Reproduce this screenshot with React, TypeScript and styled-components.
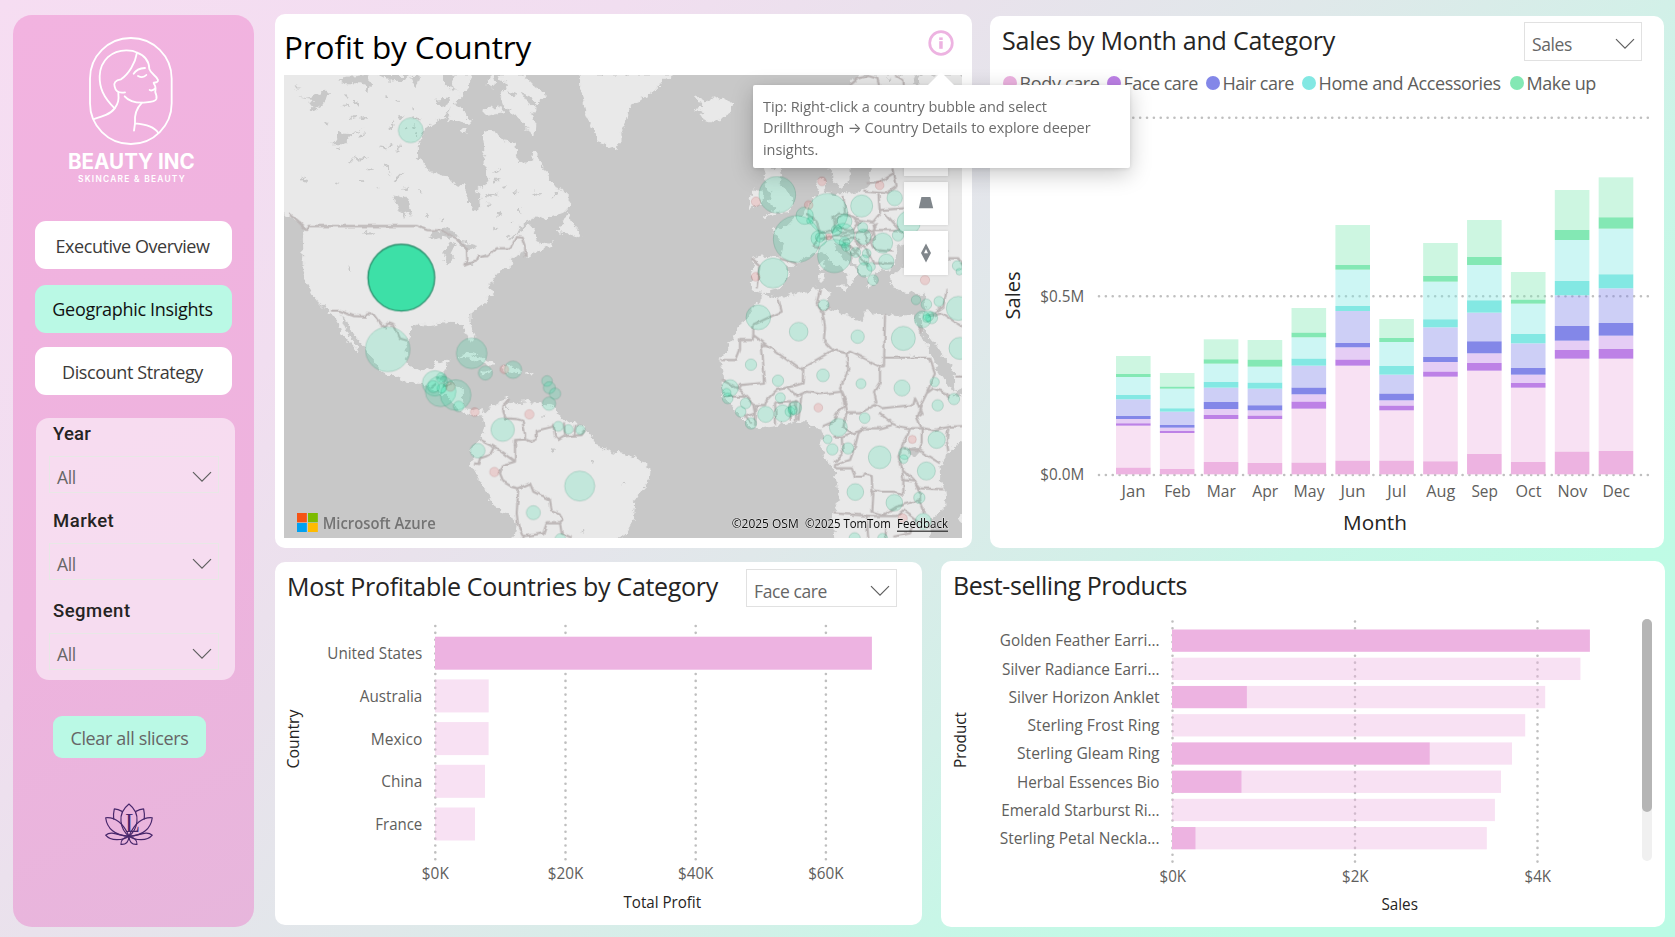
import React from "react";
import styled, { createGlobalStyle } from "styled-components";

const FONT = '"Open Sans", "Noto Sans", sans-serif';
const PINK = "#edb3e1";

const GlobalStyle = createGlobalStyle`
  *, *::before, *::after { box-sizing: border-box; }
  body { margin: 0; font-family: ${FONT}; }
  svg { display: block; }
`;

const Page = styled.div`
  width: 1675px;
  height: 937px;
  overflow: hidden;
  display: flex;
  padding: 14px 0 0 13px;
  background: linear-gradient(135deg, #f6ddf2 0%, #f1def0 24%, #e9e2ec 37%, #e0e8ea 50%, #d2f0e8 64%, #c8f6e7 71%, #bffbe5 84%, #bbfbe5 100%);
`;

/* ---------- sidebar ---------- */
const Sidebar = styled.aside`
  width: 241px;
  height: 912px;
  flex: none;
  margin-top: 0.5px;
  border-radius: 19px;
  background: linear-gradient(155deg, #f2b3e0 0%, #eeb3de 60%, #e7b6dc 100%);
`;

const LogoArea = styled.div`
  height: 206.5px;
  padding: 20.7px 0 0 53.6px;
`;

const Nav = styled.nav`
  padding-left: 22px;
`;

const NavButton = styled.div<{ $active?: boolean; $gap: number; $spacing: number }>`
  width: 197px;
  height: 48px;
  margin-bottom: ${(p) => p.$gap}px;
  padding-right: 2px;
  border-radius: 11px;
  background: ${(p) => (p.$active ? "#baf9e5" : "#fff")};
  color: ${(p) => (p.$active ? "#111" : "#3b3a39")};
  font-size: 18px;
  letter-spacing: ${(p) => p.$spacing}px;
  line-height: ${(p) => (p.$active ? 48 : 50)}px;
  text-align: center;
  white-space: nowrap;
`;

const SlicerPanel = styled.section`
  width: 199px;
  height: 262px;
  margin: 22.8px 0 0 23px;
  padding-left: 13px;
  border-radius: 13px;
  background: rgba(250, 236, 246, 0.72);
`;

const Slicer = styled.div<{ $height: number }>`
  height: ${(p) => p.$height}px;
`;

const SlicerTitle = styled.div<{ $spacing: number }>`
  padding: 5px 0 0 4px;
  height: 38px;
  font: 500 18.5px/22px Roboto, sans-serif;
  letter-spacing: ${(p) => p.$spacing}px;
  color: #252423;
`;

const SelectBox = styled.div<{ $width: number; $height: number; $line: string }>`
  width: ${(p) => p.$width}px;
  height: ${(p) => p.$height}px;
  flex: none;
  padding: 5px 6px 0 7px;
  border: 1px solid ${(p) => p.$line};
  display: flex;
  align-items: center;
  justify-content: space-between;
  font-size: 17.5px;
  letter-spacing: -0.4px;
  color: #666;
`;

const ClearButton = styled.div`
  width: 153px;
  height: 42.5px;
  margin: 36px 0 0 40px;
  border-radius: 9px;
  background: #baf9e5;
  color: #666;
  font-size: 18px;
  letter-spacing: -0.35px;
  line-height: 45px;
  text-align: center;
  white-space: nowrap;
`;

const LotusArea = styled.div`
  padding: 43.8px 0 0 91px;
`;

/* ---------- main area ---------- */
const Main = styled.main`
  width: 1390px;
  margin-left: 21px;
  flex: none;
`;

const CardRow = styled.div<{ $align: string; $gap: number; $top?: number }>`
  display: flex;
  align-items: ${(p) => p.$align};
  gap: ${(p) => p.$gap}px;
  margin-top: ${(p) => p.$top ?? 0}px;
`;

const Card = styled.section<{ $width: number; $height: number; $drop?: number }>`
  position: relative;
  width: ${(p) => p.$width}px;
  height: ${(p) => p.$height}px;
  flex: none;
  margin-top: ${(p) => p.$drop ?? 0}px;
  border-radius: 10px;
  background: #fff;
`;

const CardHead = styled.header<{ $height: number; $left: number; $right: number; $top?: number }>`
  height: ${(p) => p.$height}px;
  padding: ${(p) => p.$top ?? 0}px ${(p) => p.$right}px 0 ${(p) => p.$left}px;
  display: flex;
  align-items: flex-start;
  justify-content: space-between;
`;

const Title = styled.h2<{ $size: number; $line: number; $spacing: number; $color?: string }>`
  margin: 0;
  font-weight: 400;
  font-size: ${(p) => p.$size}px;
  line-height: ${(p) => p.$line}px;
  letter-spacing: ${(p) => p.$spacing}px;
  color: ${(p) => p.$color ?? "#252423"};
  white-space: nowrap;
`;

const InfoButton = styled.div`
  padding-top: 6.3px;
`;

const MapArea = styled.div`
  position: relative;
  width: 678px;
  height: 463px;
  margin-left: 9px;
`;

const MapControls = styled.div`
  position: absolute;
  top: 57px;
  left: 620px;
  display: flex;
  flex-direction: column;
  gap: 6px;
`;

const MapButton = styled.div`
  width: 44px;
  height: 43.5px;
  background: #fff;
  box-shadow: 0 0 3px rgba(0, 0, 0, 0.12);
  display: flex;
  align-items: center;
  justify-content: center;
`;

const Tooltip = styled.div`
  position: absolute;
  z-index: 5;
  left: 478px;
  top: 71px;
  width: 377px;
  height: 83px;
  padding: 10.6px 10px;
  border-radius: 2px;
  background: #fff;
  box-shadow: 0 6px 22px rgba(0, 0, 0, 0.22), 0 1px 4px rgba(0, 0, 0, 0.1);
  color: #6b6b6b;
  font-size: 14.5px;
  line-height: 21.5px;
  letter-spacing: -0.07px;
  white-space: nowrap;
  &::before {
    content: "";
    position: absolute;
    left: 175px;
    top: -13px;
    border: 13px solid transparent;
    border-top-width: 0;
    border-bottom-color: #fff;
  }
`;

const Arrow = styled.span`
  font-family: Inter, sans-serif;
  font-size: 14.5px;
  line-height: 1;
  letter-spacing: -0.6px;
`;

const Legend = styled.div`
  display: grid;
  grid-template-columns: 104px 99px 96px 208px auto;
  height: 27px;
  padding: 0 0 0.5px 12.5px;
  align-items: center;
`;

const LegendItem = styled.div<{ $spacing: number }>`
  display: flex;
  align-items: center;
  gap: 3px;
  font-size: 18px;
  line-height: 24px;
  letter-spacing: ${(p) => p.$spacing}px;
  color: #605e5c;
  white-space: nowrap;
`;

const Dot = styled.span<{ $color: string }>`
  width: 14px;
  height: 14px;
  border-radius: 50%;
  background: ${(p) => p.$color};
`;

const ScrollTrack = styled.div`
  position: absolute;
  top: 58px;
  right: 13px;
  width: 10.3px;
  height: 242px;
  border-radius: 6px;
  background: #f0f0f0;
`;

const ScrollThumb = styled.div`
  height: 193px;
  border-radius: 6px;
  background: #b5b5b5;
`;

/* ---------- small drawings ---------- */
const Chevron = () => (
  <svg width="20" height="12" viewBox="0 0 20 12" fill="none" stroke="#5f5f5f" strokeWidth="1.2">
    <path d="M1 1.2 L10 10.2 L19 1.2" />
  </svg>
);

const Logo = () => (
  <svg width="130" height="150" viewBox="200 105 390 450" fill="none" stroke="#fff" strokeWidth="5.5" strokeLinecap="round" strokeLinejoin="round">
    <rect x="269" y="114" width="245" height="318" rx="122" />
    <path d="M343 325C308 290 297 262 298 228C300 180 335 151 378 151C395 151 404 154 410 158C432 166 446 182 447 207C452 223 470 228 473 240C474 247 466 248 460 248C460 254 466 255 465 262C467 268 464 272 465 277C468 284 470 291 468 297C464 308 440 306 425 308C400 308 385 303 373 289" />
    <path d="M410 158C405 190 385 222 362 238C345 240 339 250 343 260C346 275 358 280 374 277" />
    <path d="M354 278C356 300 354 310 343 325C330 343 305 350 281 357" />
    <path d="M425 308C408 325 402 350 404 370L401 392M404 370C440 374 462 380 474 399" />
    <path d="M400 221C408 208 420 205 434 204M413 228Q428 236 438 225M448 270Q456 274 464 266" />
    <text x="203" y="508" textLength="380" lengthAdjust="spacingAndGlyphs" fill="#fff" stroke="none" fontFamily="Inter" fontWeight="700" fontSize="63">BEAUTY INC</text>
    <text x="233" y="546" textLength="320" fill="#fff" stroke="none" fontFamily="Inter" fontWeight="600" fontSize="25">SKINCARE &amp; BEAUTY</text>
  </svg>
);

const LotusSide = () => (
  <>
    <path d="M368 1203C357 1197 350 1195 343 1195C340 1207 340 1216 341 1226" />
    <path d="M387 1275C371 1238 345 1218 317 1221C321 1252 345 1274 387 1275Z" />
    <path d="M387 1275C362 1277 336 1256 317 1272C332 1290 368 1288 387 1275Z" />
    <path d="M387 1275C372 1278 362 1285 363 1299C378 1300 386 1290 387 1275Z" />
  </>
);

const Lotus = () => (
  <svg width="50.6" height="45.2" viewBox="312 1175 152 132" preserveAspectRatio="none" fill="none" stroke="#47276b" strokeWidth="3.6" strokeLinejoin="round">
    <path d="M387 1181C405 1195 413 1215 411 1232C409 1250 400 1265 387 1275C374 1265 365 1250 363 1232C361 1215 369 1195 387 1181Z" />
    <LotusSide />
    <g transform="translate(774 0) scale(-1 1)"><LotusSide /></g>
    <text x="376" y="1263" textLength="44" lengthAdjust="spacingAndGlyphs" fill="#47276b" stroke="none" fontFamily="Liberation Serif" fontSize="77">L</text>
  </svg>
);

const InfoIcon = () => (
  <svg width="26" height="26" viewBox="0 0 26 26" fill={PINK}>
    <circle cx="13" cy="13" r="11.3" fill="none" stroke={PINK} strokeWidth="2.7" />
    <rect x="11.2" y="7.4" width="3.5" height="2.6" />
    <rect x="11.2" y="11.2" width="3.5" height="7.6" />
  </svg>
);

/* ---------- map ---------- */
type Bubble = [number, number, number];

const westBubbles: Bubble[] = [
  [422, 391, 37], [353, 1048, 67], [605, 1060, 46], [646, 1119, 21], [729, 1109, 26], [495, 1150, 38],
  [512, 1174, 46], [557, 1185, 46], [514, 1133, 15], [515, 1165, 14], [490, 1160, 18], [566, 1219, 16], [698, 1289, 35],
  [623, 1352, 22], [929, 1458, 45], [790, 1538, 21], [831, 1143, 16], [838, 1163, 18], [855, 1181, 17],
  [837, 1211, 20], [865, 1279, 15], [895, 1288, 14], [931, 1290, 14], [871, 1617, 16],
];
const westLosses: Bubble[] = [[703, 1108, 13], [541, 1160, 14], [614, 1236, 13], [778, 1243, 14], [673, 1416, 14]];
const eastBubbles: Bubble[] = [
  [472, 584, 55], [725, 618, 33], [824, 594, 23], [866, 668, 35], [623, 640, 60], [530, 717, 70], [554, 647, 26],
  [570, 662, 10], [597, 715, 24], [600, 712, 14], [643, 768, 50], [674, 664, 22], [650, 690, 16], [670, 703, 33], [674, 727, 16],
  [678, 740, 13], [728, 682, 15], [730, 710, 23], [788, 729, 30], [834, 706, 17], [707, 757, 15], [740, 760, 13], [732, 780, 15],
  [799, 785, 23], [734, 809, 22], [753, 800, 13], [759, 840, 16], [459, 819, 45], [1012, 797, 15], [1018, 815, 10],
  [888, 900, 14], [919, 913, 16], [957, 904, 15], [1015, 925, 36], [908, 958, 25], [935, 953, 18], [920, 955, 12],
  [925, 948, 16], [611, 915, 16], [415, 952, 37], [536, 995, 28], [713, 1010, 20], [850, 1015, 36], [1020, 1045, 33],
  [393, 1094, 17], [474, 1142, 17], [609, 1126, 19], [723, 1151, 15], [846, 1164, 24], [944, 1146, 14], [1002, 1197, 17],
  [953, 1216, 17], [330, 1164, 25], [320, 1178, 13], [323, 1195, 16], [377, 1210, 16], [362, 1235, 16], [393, 1270, 17],
  [437, 1243, 24], [481, 1193, 15], [488, 1240, 25], [510, 1235, 15], [525, 1224, 20], [518, 1230, 14], [655, 1282, 27],
  [734, 1254, 16], [623, 1318, 13], [637, 1348, 17], [684, 1345, 17], [779, 1372, 34], [854, 1360, 18], [851, 1377, 13],
  [950, 1319, 26], [919, 1413, 27], [706, 1476, 25], [823, 1508, 25], [898, 1493, 17], [910, 1564, 24], [704, 1615, 17], [788, 1615, 15],
];
const eastLosses: Bubble[] = [
  [606, 544, 13], [779, 556, 13], [408, 605, 14], [566, 615, 13], [407, 830, 13], [915, 840, 14], [595, 1223, 13],
  [877, 1318, 12], [848, 1555, 14], [626, 710, 9],
];

const lakes: [number, number, number, number][] = [
  [80, 260, 18, 50], [228, 288, 12, 80], [228, 318, 24, 20], [258, 310, 18, 60], [350, 284, 12, 60], [384, 302, 10, -20],
  [432, 327, 12, 0], [172, 372, 14, 20], [252, 352, 26, -20], [285, 356, 26, 10], [276, 408, 22, -20], [204, 448, 12, 0],
  [365, 380, 30, -70], [392, 350, 18, 20], [440, 352, 26, 20], [340, 440, 20, 40], [385, 445, 24, -70], [360, 435, 14, 0],
  [270, 475, 50, -8], [242, 486, 10, 90], [304, 510, 14, -30], [350, 505, 44, 65], [385, 530, 44, -50], [279, 545, 10, 70],
  [323, 562, 14, -20], [202, 553, 18, 5], [102, 542, 28, 60], [408, 566, 18, -20], [448, 572, 16, 60], [470, 650, 16, 0],
  [516, 660, 14, 90], [680, 512, 24, -30], [680, 540, 14, 20], [700, 562, 20, -20], [665, 586, 40, -5], [738, 574, 20, 30],
  [800, 580, 30, 10], [656, 612, 12, 0], [690, 645, 20, -30], [748, 632, 22, 90], [728, 668, 12, 0], [678, 686, 12, 0],
  [860, 582, 30, -30], [296, 700, 28, -5], [234, 806, 16, 60], [408, 384, 10, 60], [436, 378, 14, -40], [438, 402, 10, 0],
  [850, 1352, 14, 10], [970, 1385, 12, 70], [1062, 1451, 16, -20], [938, 1598, 16, -40], [820, 1250, 10, 0], [714, 1222, 14, 80],
];

const landWest = `
M42 225H520L525 260L550 266L572 290L552 302L535 330L520 352L490 370L470 385L455 405L442 440L443 480L458 485L470 517L490 516L520 530L560 555L588 558V600L600 612L616 637L632 625L630 600L622 568L640 560L657 535L655 510L640 480L645 455L640 400L660 395L690 405L700 425L735 430L738 480L762 493L788 480L792 450L802 465L815 500L830 525L850 560L880 572L898 590L895 625L880 640L840 652L790 655L762 672L740 690L706 722L722 717L748 695L780 678L797 680L790 700L800 725L822 738L850 725L848 735L800 752L775 770L760 755L725 775V800L690 808L665 840L657 865L664 885L655 900L630 918L600 940V965L612 1010L605 1030L597 1015L583 985L570 965L540 964L505 968L480 974L450 970L425 985L412 1010L405 1040L408 1080L425 1105L450 1117L490 1107L497 1085L535 1080L530 1105L517 1125L505 1145L540 1150L577 1160V1200L585 1230L610 1232L635 1226L650 1245L640 1248L610 1245L585 1240L560 1222L545 1202L520 1180L490 1165L455 1150L415 1147L370 1128L335 1110L320 1095L300 1065L280 1035L250 1005L232 965L208 942L222 975L236 1003L255 1030L270 1058L242 1030L213 998L205 970L180 932L165 925L140 900L125 875L110 845L98 810L102 760L100 720L97 690L115 692L90 665L60 650L42 645Z
M545 225H600L598 260L572 290L552 262Z
M690 225L712 260L690 290L700 320L740 345L770 385L792 405L795 370L780 340L800 320L830 285L800 265L775 240L760 225Z
M650 240L670 230L677 250L662 262L650 252Z
M530 362L550 300L575 330L607 365L580 368L552 358Z M570 392L590 382L585 398Z M636 335L660 318L672 328L690 322L702 338L655 345Z
M862 698L895 636L905 668L925 690L932 712L900 702Z
M930 225L928 260L940 300L950 340L965 380L985 425L1010 432L1035 450L1050 428V400L1065 370L1075 325L1120 295L1160 265L1180 238L1215 225Z
M565 1070L600 1060L640 1075L680 1092L650 1092L610 1075Z M692 1105L725 1098L752 1112L720 1120Z M765 1118H782V1122H765Z M636 1116H658V1121H636Z
M640 1250L665 1220L690 1205L718 1197L708 1212L740 1208L780 1205L812 1215L850 1222L875 1255L900 1270L940 1275L965 1310L985 1340L1030 1358L1080 1368L1110 1380L1140 1405L1138 1440L1110 1480L1095 1490L1090 1560L1068 1600L1040 1620H735L740 1580L735 1560L700 1535L665 1505L645 1465L620 1420L605 1395V1380L615 1368L605 1350L618 1335L632 1320L640 1300L645 1275Z`;

const waterWest = `
M475 712L500 692L520 680L545 690L567 715L550 715L520 708L490 718Z M525 745L540 725L560 730L545 760V790L530 798L522 780Z
M560 722L590 725L622 735L605 750L590 755L580 740Z M585 795L625 775L605 794Z M630 768L655 762L652 770L632 774Z M370 590L385 592L398 585L412 600L425 652L412 630L402 655L385 620Z
M175 430L205 420L200 400L240 402L285 380L240 408L225 430Z M88 295L130 290L160 270L178 285L160 312L130 330L112 310L138 300Z
M200 240L220 232L290 225L300 245L295 285L280 250L230 250Z M320 225H420L400 240L360 245Z M425 225H450L435 265Z M515 225H542L548 250L530 265Z
M495 302L520 300L540 295L528 318L515 322Z M715 272L742 285L725 298Z M752 275L785 290L800 320L775 310Z M710 322L728 332L715 340Z M745 360L778 385L765 380Z`;

const bordersWest = `
M60 645L88 668L110 690L115 678H440L470 690L520 692L560 718L590 745L592 780L583 797L620 782L625 770L655 768L680 745H720L740 708L755 710L765 740L767 770
M180 932H205L250 948L285 950L288 943H310L330 970L345 982L355 970L372 976L390 1015L412 1022
M718 1197L700 1215V1235L707 1255L740 1257L757 1262L765 1300V1318L785 1325L800 1318V1292L848 1280L850 1270L855 1310L865 1320L885 1308L935 1305L945 1290
M765 1318L735 1320V1385L700 1360L672 1340L632 1320 M740 1320L733 1338 M882 1270L885 1305 M918 1275L912 1305
M672 1340L660 1365L630 1375L625 1392L612 1390 M735 1385L700 1395L690 1420L700 1445L725 1460L745 1465L780 1450L790 1475L840 1500L845 1530L872 1540L880 1560L870 1570L830 1570L820 1600L790 1605L760 1608L745 1580L740 1540L745 1465
M870 1570L875 1600L905 1613 M760 1608V1620 M500 1135L520 1130L525 1160L545 1150 M480 1165L500 1150`;

const landEast = `
M225 292L250 306L275 300L312 290L338 315L330 340L280 368L250 358L240 346L256 340L224 330L250 322Z
M690 245L720 228L760 225H1034V775L985 775L984 742L960 700L930 712L880 715L850 730L830 740L820 780L830 800L800 810L770 815L756 830L770 855L750 860L735 830L715 800L690 760L665 735L640 722L645 745L670 780L720 820L702 830L690 852L680 845L690 820L640 790L610 755L590 755L540 780L530 798L500 800L505 830L480 865L440 875L400 870L395 830L405 790L395 775L430 768L480 775L490 730L458 690L500 680L520 660L558 640L570 610L600 585L588 545L612 530L615 580L660 585L720 575L750 562L745 520L760 505V400L690 400V540L660 562L640 530L630 505Z
M430 505H480L485 530L470 532L490 560L518 600L510 635L470 637L435 652L450 640L470 622L448 610L455 580L440 555L436 530Z
M385 625L400 570L430 575L420 615Z M650 855L682 855L676 872Z M600 815H612V840H600Z M604 785H611V805H604Z
M810 825L850 805L900 790L985 775H1034V995L1034 1120L1010 1130L990 1095L960 1050L930 1010L905 975L900 950L920 920L915 880L880 880L830 870L812 840Z M1003 1130H1034V1160L1005 1175Z
M430 875L440 888L480 895L520 880L595 868L625 870L630 885L620 895L632 930L690 950L725 965L740 935L790 945L830 950L880 945L890 975L905 1010L930 1060L950 1110L980 1150L1003 1180V1190L1034 1195V1315L990 1350L960 1400L962 1440L972 1465L975 1520L930 1560V1620H645L638 1560L660 1490L650 1440L640 1400L615 1370L605 1340L612 1310L605 1285L570 1280L550 1262L520 1265L460 1275L400 1285L365 1250L330 1210L305 1180L312 1140L303 1080L330 1030L355 980L385 955L400 920L425 905Z
M1018 1560L1034 1530V1570Z`;

const bordersEast = `
M475 895L485 935L440 955L400 975V1005L440 1035L540 1108L640 1050L612 1020L615 980L608 940L590 910L600 870
M400 1000L398 1020H360V1050L348 1080H303 M440 1035H425L435 1148L360 1155L355 1165L305 1140
M540 1108H550L548 1150L520 1158L470 1170L440 1200L435 1215H400L380 1190L355 1165 M640 1050L680 1060L685 1110L660 1165L665 1175L600 1182L560 1175L530 1188L500 1160
M680 1060L690 1055L780 1100V1145L762 1175L770 1210 M795 945L792 1098L780 1100 M792 1073H930L945 1120L920 1180
M612 935L632 920 M545 1180L535 1262 M665 1175L680 1210L650 1240L640 1265L605 1280
M665 1175L680 1240L720 1240L765 1215L785 1225L830 1220L880 1215L885 1195L895 1215L905 1240L890 1250L905 1285H870L840 1280L815 1270L780 1240
M890 1250L905 1210L920 1180L940 1165L980 1180L990 1195 M905 1285L940 1290L990 1280L1034 1278
M680 1240L670 1280L700 1300L730 1285H780L815 1275 M730 1285L715 1300L705 1340L690 1380L645 1395V1405H695L705 1430H730L735 1420L755 1425L757 1470L780 1475H820L850 1490V1440L845 1400L835 1370L850 1330L865 1300L870 1285
M640 1310H665L668 1360L645 1385 M665 1310L690 1300L705 1300 M905 1285V1330L895 1350L960 1390 M985 1285L980 1320L985 1355 M850 1345L895 1350
M850 1410L880 1440L900 1465L970 1468 M755 1470L760 1480L757 1535L790 1545L830 1520L850 1515L900 1500L915 1540 M850 1440L885 1445L900 1480V1510
M640 1540L757 1548H830L850 1530 M740 1550L745 1620 M800 1570L795 1620 M850 1530L890 1560L870 1600L820 1610
M410 1215L405 1275 M465 1210L468 1275 M510 1205L512 1262 M528 1200V1262 M465 1210L535 1205 M380 1190H310 M400 1215L405 1240L375 1250L395 1270
M935 945L970 920L980 870 M925 950L965 940L1034 985 M905 975L900 1000 M1003 1130H1034
M480 775L530 795 M395 775L418 795L410 865 M560 640L590 665L600 700L580 740L600 745 M670 585L675 640L650 655L640 690L600 700
M775 580L780 640L760 665L720 660L675 640 M640 680L700 690L720 665 M690 700L760 690L770 670 M760 690L750 720L770 750L820 755 M710 720L740 750L760 790L820 790
M600 720L640 710L690 705 M680 730L720 770L745 800 M760 670L765 690L830 690L852 700 M740 550L780 545L820 520 M730 575L800 580L830 560 M780 630L852 625 M795 640L840 690 M820 505L830 560
M690 255L715 235L745 228L772 236L778 260 M825 225L850 240L852 262 M640 650L655 640L700 650L715 670L700 690L660 700L645 680Z M670 720L700 715L720 740L700 765L680 750Z M735 700L760 690L765 715L740 735Z M985 775L1015 775L1030 800`;

const Bubbles = ({ items, loss }: { items: Bubble[]; loss?: boolean }) => (
  <g
    fill={loss ? "rgba(232,80,80,0.17)" : "rgba(8,226,155,0.17)"}
    stroke={loss ? "rgba(150,70,70,0.17)" : "rgba(20,110,80,0.19)"}
    strokeWidth="3"
  >
    {items.map(([x, y, r], i) => (
      <circle key={i} cx={x} cy={y} r={r} />
    ))}
  </g>
);

const WorldMap = () => (
  <svg width="678" height="463" viewBox="0 0 2034 1389">
    <defs>
      <filter id="coast" x="0" y="0" width="2034" height="1389" filterUnits="userSpaceOnUse" colorInterpolationFilters="sRGB">
        <feTurbulence type="fractalNoise" baseFrequency="0.05" numOctaves="3" seed="4" />
        <feDisplacementMap in="SourceGraphic" scale="26" xChannelSelector="R" yChannelSelector="G" />
      </filter>
      <filter id="border" x="0" y="0" width="2034" height="1389" filterUnits="userSpaceOnUse" colorInterpolationFilters="sRGB">
        <feTurbulence type="fractalNoise" baseFrequency="0.04" numOctaves="2" seed="4" />
        <feDisplacementMap in="SourceGraphic" scale="12" xChannelSelector="R" yChannelSelector="G" />
      </filter>
    </defs>
    <rect width="2034" height="1389" fill="#c8c8c8" />
    <g filter="url(#coast)">
      <rect x="-60" y="-60" width="2200" height="1600" fill="#c8c8c8" />
      <g transform="translate(-42 -225)">
        <path d={landWest} fill="#e9e9e9" stroke="#e9e9e9" strokeWidth="3" />
        <path d="M-20 205H520V230H50V640H-20Z" fill="#e9e9e9" />
        <path d={waterWest} fill="#c8c8c8" />
        <g fill="#c8c8c8">
          {lakes.map(([x, y, w, a], i) => (
            <path key={i} transform={`translate(${x} ${y}) rotate(${a})`} d={`M${-w / 2} 0L${-w / 6} -5L${w / 8} -2L${w / 2} -3L${w / 5} 4L${-w / 5} 3Z`} />
          ))}
        </g>
      </g>
      <g transform="translate(1008 -225)">
        <path d={landEast} fill="#e9e9e9" stroke="#e9e9e9" strokeWidth="3" />
        <path d="M865 1345L890 1340L900 1355L885 1372L868 1362Z M870 1065L885 1060V1070Z M985 1570L990 1560V1580Z M800 235L815 240L808 245Z M875 230L905 225L895 255L885 245Z M860 1425L882 1440L870 1435Z" fill="#c8c8c8" />
      </g>
    </g>
    <g fill="none" stroke="#bcb6b6" strokeWidth="6.5" strokeLinejoin="round" filter="url(#border)">
      <path transform="translate(-42 -225)" d={bordersWest} />
      <path transform="translate(1008 -225)" d={bordersEast} />
    </g>
    <g transform="translate(-42 -225)">
      <Bubbles items={westBubbles} />
      <Bubbles items={westLosses} loss />
      <circle cx="394" cy="833" r="100" fill="#3de0a7" stroke="#2c8f6d" strokeWidth="4" />
    </g>
    <g transform="translate(1008 -225)">
      <Bubbles items={eastBubbles} />
      <Bubbles items={eastLosses} loss />
    </g>
    <g transform="translate(39 1314)">
      <rect width="29.5" height="28" fill="#f65314" />
      <rect x="33" width="29.5" height="28" fill="#7cbb00" />
      <rect y="30" width="29.5" height="27" fill="#00a1f1" />
      <rect x="33" y="30" width="29.5" height="27" fill="#ffbb00" />
    </g>
    <text x="116" y="1361" textLength="339" lengthAdjust="spacingAndGlyphs" fontFamily={FONT} fontWeight="600" fontSize="48" fill="#737373">Microsoft Azure</text>
    <g fontFamily={FONT} fontSize="36" fill="#0a0a0a" stroke="#e6e6e6" strokeWidth="3" paintOrder="stroke">
      <text x="1343" y="1359" textLength="201" lengthAdjust="spacingAndGlyphs">©2025 OSM</text>
      <text x="1563" y="1359" textLength="257" lengthAdjust="spacingAndGlyphs">©2025 TomTom</text>
      <text x="1839" y="1359" textLength="153" lengthAdjust="spacingAndGlyphs">Feedback</text>
    </g>
    <rect x="1839" y="1367" width="153" height="3" fill="#0a0a0a" />
  </svg>
);

/* ---------- charts ---------- */
interface LabelProps {
  x: number;
  y: number;
  w: number;
  size?: number;
  color?: string;
  anchor?: "start" | "middle" | "end";
  rotate?: boolean;
  children: string;
}

const ChartText = ({ x, y, w, size = 16, color = "#605e5c", anchor = "middle", rotate, children }: LabelProps) => (
  <text
    x={x}
    y={y}
    textLength={w}
    lengthAdjust="spacingAndGlyphs"
    textAnchor={anchor}
    fontFamily={FONT}
    fontSize={size}
    fill={color}
    transform={rotate ? `rotate(-90 ${x} ${y})` : undefined}
  >
    {children}
  </text>
);

const GridLine = ({ x1, y1, x2, y2 }: { x1: number; y1: number; x2: number; y2: number }) => (
  <line x1={x1} y1={y1} x2={x2} y2={y2} stroke="#bfbfbf" strokeWidth="2.6" strokeDasharray="0.01 6.85" strokeLinecap="round" />
);

const categories = [
  { name: "Body care", color: PINK, spacing: -0.35 },
  { name: "Face care", color: "#bd81e6", spacing: -0.5 },
  { name: "Hair care", color: "#8387e8", spacing: -0.5 },
  { name: "Home and Accessories", color: "#83e8e3", spacing: -0.37 },
  { name: "Make up", color: "#83e8b4", spacing: -0.45 },
];

/* Stacked segment edges per month, bottom to top, in thirds of a pixel below y = 280. */
const months: { name: string; w: number; edges: number[] }[] = [
  { name: "Jan", w: 24, edges: [583, 563, 437, 430, 417, 408, 358, 345, 291, 282, 228] },
  { name: "Feb", w: 26.5, edges: [583, 567, 459, 453, 443, 435, 395, 385, 326, 320, 279] },
  { name: "Mar", w: 29, edges: [583, 546, 417, 405, 387, 366, 323, 306, 251, 238, 178] },
  { name: "Apr", w: 26, edges: [583, 549, 417, 407, 391, 376, 326, 308, 260, 239, 180] },
  { name: "May", w: 31, edges: [583, 548, 386, 365, 343, 323, 257, 236, 172, 158, 84] },
  { name: "Jun", w: 25, edges: [583, 542, 257, 239, 202, 189, 93, 78, -31, -45, -165] },
  { name: "Jul", w: 19, edges: [583, 542, 391, 377, 361, 341, 284, 258, 186, 174, 117] },
  { name: "Aug", w: 29, edges: [583, 544, 290, 275, 246, 231, 142, 118, 5, -12, -111] },
  { name: "Sep", w: 26.5, edges: [583, 522, 272, 249, 220, 184, 98, 61, -45, -69, -180] },
  { name: "Oct", w: 26, edges: [583, 546, 323, 309, 284, 264, 190, 162, 71, 59, -24] },
  { name: "Nov", w: 30, edges: [583, 515, 236, 210, 182, 138, 46, 3, -120, -150, -270] },
  { name: "Dec", w: 27.5, edges: [583, 513, 236, 207, 167, 129, 25, -17, -154, -188, -308] },
];

const MonthChart = () => (
  <svg width="674" height="451" viewBox="990 97 674 451">
    <GridLine x1={1099} y1={117.7} x2={1648} y2={117.7} />
    <GridLine x1={1099} y1={296.3} x2={1648} y2={296.3} />
    <GridLine x1={1099} y1={475} x2={1648} y2={475} />
    <ChartText x={1084.2} y={302} w={44} anchor="end">$0.5M</ChartText>
    <ChartText x={1084.2} y={480} w={44} anchor="end">$0.0M</ChartText>
    {months.map((m, i) => {
      const x = 1116 + i * 43.88;
      return (
        <g key={m.name}>
          {m.edges.slice(1).map((top, k) => (
            <rect
              key={k}
              x={x}
              y={280 + top / 3}
              width={34.6}
              height={(m.edges[k] - top) / 3}
              fill={categories[Math.floor(k / 2)].color}
              fillOpacity={k % 2 ? 0.4 : 1}
            />
          ))}
          <ChartText x={x + 17.6} y={496.5} w={m.w}>{m.name}</ChartText>
        </g>
      );
    })}
    <ChartText x={1375} y={529.6} w={64} size={20.5} color="#252423">Month</ChartText>
    <ChartText x={1020} y={295.5} w={48} size={20.5} color="#252423" rotate>Sales</ChartText>
  </svg>
);

const countries = [
  { name: "United States", w: 95, end: 871.9, full: true },
  { name: "Australia", w: 62.5, end: 488.7 },
  { name: "Mexico", w: 51.5, end: 488.6 },
  { name: "China", w: 41, end: 485 },
  { name: "France", w: 47, end: 475 },
];

const CountryChart = () => (
  <svg width="647" height="308" viewBox="275 617 647 308">
    {[0, 20, 40, 60].map((v, i) => (
      <g key={v}>
        <GridLine x1={435.3 + i * 130.2} y1={626} x2={435.3 + i * 130.2} y2={860} />
        <ChartText x={435.3 + i * 130.2} y={879} w={v ? 35.5 : 27}>{`$${v}K`}</ChartText>
      </g>
    ))}
    {countries.map((c, i) => (
      <g key={c.name}>
        <rect x={435} y={636.7 + i * 42.7} width={c.end - 435} height={33} fill={PINK} fillOpacity={c.full ? 1 : 0.4} />
        <ChartText x={422.3} y={659.2 + i * 42.75} w={c.w} anchor="end">{c.name}</ChartText>
      </g>
    ))}
    <ChartText x={662.3} y={908} w={77.5} color="#252423">Total Profit</ChartText>
    <ChartText x={299} y={739} w={59} color="#252423" rotate>Country</ChartText>
  </svg>
);

const products = [
  { name: "Golden Feather Earri...", w: 159.7, end: 1589.9, mark: 1589.9 },
  { name: "Silver Radiance Earri...", w: 157.5, end: 1580.4, mark: 0 },
  { name: "Silver Horizon Anklet", w: 151, end: 1545.2, mark: 1246.9 },
  { name: "Sterling Frost Ring", w: 132, end: 1525.2, mark: 0 },
  { name: "Sterling Gleam Ring", w: 142.5, end: 1512, mark: 1429.8 },
  { name: "Herbal Essences Bio", w: 142.5, end: 1501, mark: 1241.6 },
  { name: "Emerald Starburst Ri...", w: 158.3, end: 1494.9, mark: 0 },
  { name: "Sterling Petal Neckla...", w: 159.7, end: 1486.8, mark: 1195.6 },
];

const ProductChart = () => (
  <svg width="690" height="317" viewBox="941 610 690 317">
    {[0, 2, 4].map((v, i) => (
      <g key={v}>
        <GridLine x1={1172.5 + i * 182.5} y1={621.5} x2={1172.5 + i * 182.5} y2={862} />
        <ChartText x={1172.8 + i * 182.5} y={882} w={26.5}>{`$${v}K`}</ChartText>
      </g>
    ))}
    {products.map((p, i) => {
      const y = 629.5 + i * 28.22;
      const from = p.mark || 1172;
      return (
        <g key={p.name}>
          {p.mark > 0 && <rect x={1172} y={y} width={p.mark - 1172} height={22.3} fill={PINK} />}
          {p.end > from && <rect x={from} y={y} width={p.end - from} height={22.3} fill={PINK} fillOpacity={0.4} />}
          <ChartText x={1159.5} y={y + 16.9} w={p.w} anchor="end">{p.name}</ChartText>
        </g>
      );
    })}
    <ChartText x={1399.7} y={910} w={36.5} color="#252423">Sales</ChartText>
    <ChartText x={966} y={740} w={56} color="#252423" rotate>Product</ChartText>
  </svg>
);

export default function App() {
  return (
    <>
      <GlobalStyle />
      <Page>
        <Sidebar>
          <LogoArea><Logo /></LogoArea>
          <Nav>
            <NavButton $gap={16} $spacing={-0.45}>Executive Overview</NavButton>
            <NavButton $gap={14} $spacing={-0.3} $active>Geographic Insights</NavButton>
            <NavButton $gap={0} $spacing={-0.4}>Discount Strategy</NavButton>
          </Nav>
          <SlicerPanel>
            <Slicer $height={87.5}>
              <SlicerTitle $spacing={0.2}>Year</SlicerTitle>
              <SelectBox $width={170} $height={37} $line="#e8e8e6">All<Chevron /></SelectBox>
            </Slicer>
            <Slicer $height={90}>
              <SlicerTitle $spacing={0.5}>Market</SlicerTitle>
              <SelectBox $width={170} $height={37} $line="#e8e8e6">All<Chevron /></SelectBox>
            </Slicer>
            <Slicer $height={80}>
              <SlicerTitle $spacing={0.5}>Segment</SlicerTitle>
              <SelectBox $width={170} $height={37} $line="#e8e8e6">All<Chevron /></SelectBox>
            </Slicer>
          </SlicerPanel>
          <ClearButton>Clear all slicers</ClearButton>
          <LotusArea><Lotus /></LotusArea>
        </Sidebar>
        <Main>
          <CardRow $align="flex-end" $gap={18}>
            <Card $width={697} $height={534}>
              <CardHead $height={61} $left={9} $right={18} $top={10}>
                <Title $size={31.5} $line={45} $spacing={-0.12} $color="#000">Profit by Country</Title>
                <InfoButton><InfoIcon /></InfoButton>
              </CardHead>
              <MapArea>
                <WorldMap />
                <MapControls>
                  <MapButton />
                  <MapButton>
                    <svg width="16" height="12" viewBox="0 0 16 12" fill="#80868b"><path d="M3.4 0H12.4L15.2 11.3H0.8Z" /></svg>
                  </MapButton>
                  <MapButton>
                    <svg width="12" height="20" viewBox="0 0 12 20" fill="#80868b" fillRule="evenodd"><path d="M6 0.5L11 10L6 19.5L1 10Z M6 6L8 10.2H4Z" /></svg>
                  </MapButton>
                </MapControls>
              </MapArea>
              <Tooltip>
                Tip: Right-click a country bubble and select<br />
                Drillthrough <Arrow>→</Arrow> Country Details to explore deeper<br />
                insights.
              </Tooltip>
            </Card>
            <Card $width={674} $height={532}>
              <CardHead $height={54} $left={12} $right={22} $top={6}>
                <Title $size={25} $line={36} $spacing={-0.23}>Sales by Month and Category</Title>
                <SelectBox $width={118} $height={39} $line="#e1e1e1">Sales<Chevron /></SelectBox>
              </CardHead>
              <Legend>
                {categories.map((c) => (
                  <LegendItem key={c.name} $spacing={c.spacing}><Dot $color={c.color} />{c.name}</LegendItem>
                ))}
              </Legend>
              <MonthChart />
            </Card>
          </CardRow>
          <CardRow $align="flex-start" $gap={19} $top={13}>
            <Card $width={647} $height={363} $drop={1}>
              <CardHead $height={55} $left={12} $right={25} $top={7}>
                <Title $size={25} $line={35} $spacing={-0.31}>Most Profitable Countries by Category</Title>
                <SelectBox $width={151} $height={38} $line="#e1e1e1">Face care<Chevron /></SelectBox>
              </CardHead>
              <CountryChart />
            </Card>
            <Card $width={724} $height={366}>
              <CardHead $height={49} $left={12} $right={12} $top={7}>
                <Title $size={25} $line={35} $spacing={-0.43}>Best-selling Products</Title>
              </CardHead>
              <ProductChart />
              <ScrollTrack><ScrollThumb /></ScrollTrack>
            </Card>
          </CardRow>
        </Main>
      </Page>
    </>
  );
}
